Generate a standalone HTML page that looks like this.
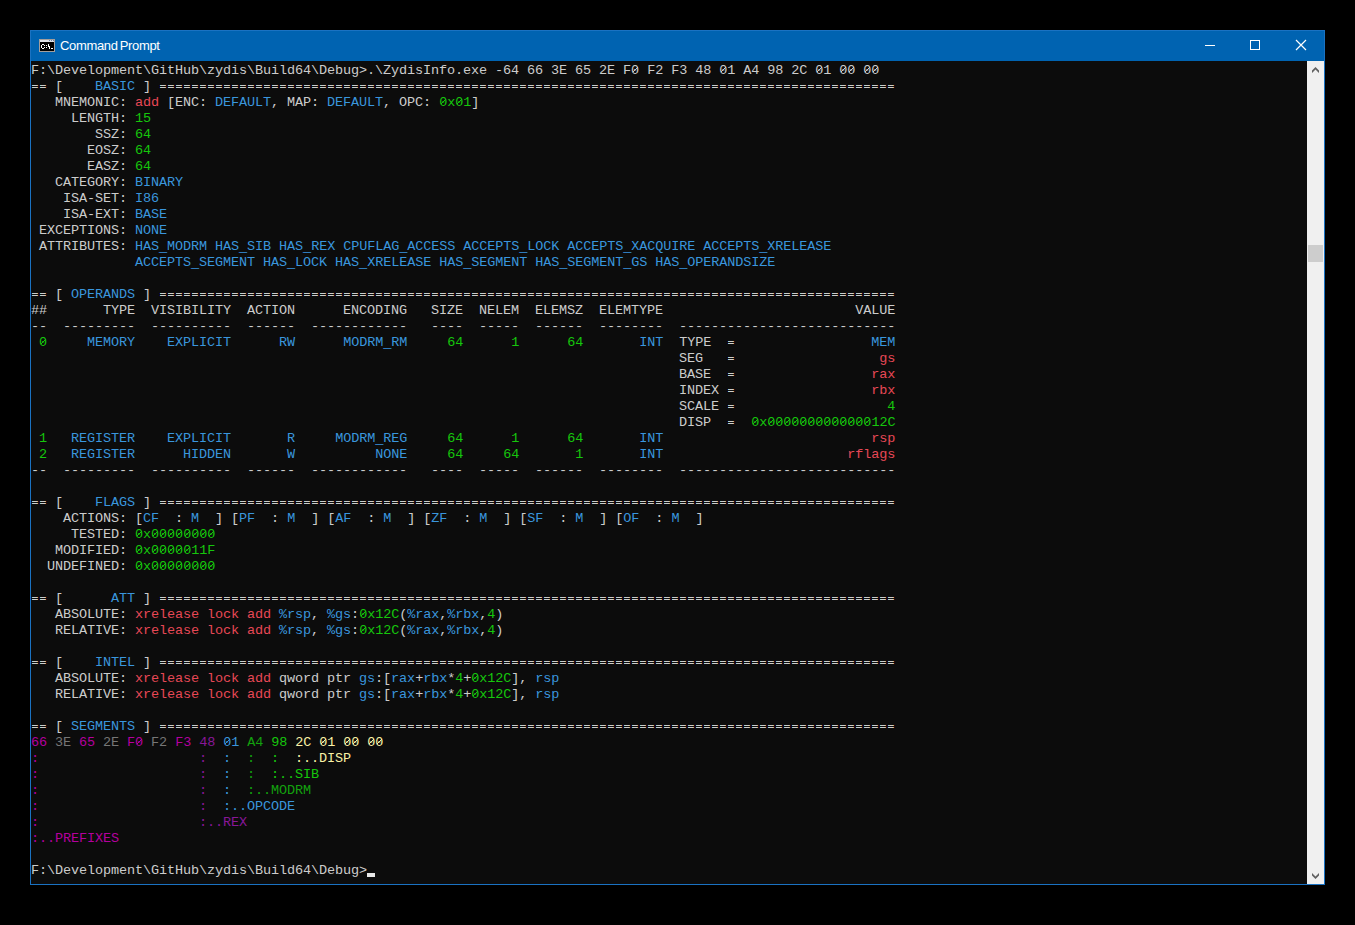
<!DOCTYPE html>
<html><head><meta charset="utf-8">
<style>
html,body{margin:0;padding:0;}
body{width:1355px;height:925px;background:#000;position:relative;overflow:hidden;}
#win{position:absolute;left:30px;top:30px;width:1293px;height:853px;background:#0063b1;border:1px solid #1a72c2;}
#title{position:absolute;left:31px;top:39px;width:20px;height:20px;}
#ttext{position:absolute;left:60px;top:38px;font-family:"Liberation Sans",sans-serif;font-size:13px;letter-spacing:-0.35px;word-spacing:-1px;color:#fff;white-space:pre;line-height:16px;}
#content{position:absolute;left:31px;top:61px;width:1276px;height:823px;background:#0c0c0c;overflow:hidden;}
#sb{position:absolute;left:1307px;top:61px;width:17px;height:823px;background:#f0f0f0;}
#thumb{position:absolute;left:1308px;top:245px;width:15px;height:17px;background:#cdcdcd;}
#term{position:absolute;left:31px;top:62.5px;margin:0;font-family:"Liberation Mono",monospace;font-size:13.5px;line-height:16px;letter-spacing:-0.1px;color:#cccccc;white-space:pre;}
.b{color:#3a96dd}.n{color:#16c60c}.r{color:#e74856}.m{color:#b4009e}.p{color:#881798}.d{color:#767676}.e{color:#13a10e}.y{color:#f9f1a5}
.eq{position:absolute;height:16px;background-image:linear-gradient(to right,#0b0b55 0 1px,#96d8d2 1px 2px,#cccccc 2px 6px,#dcb46e 6px 7px,#4a0a0a 7px 8px),linear-gradient(to right,#0b0b55 0 1px,#96d8d2 1px 2px,#cccccc 2px 6px,#dcb46e 6px 7px,#4a0a0a 7px 8px);background-size:8px 1px,8px 1px;background-position:0 8px,0 10px;background-repeat:repeat-x;}
#term i{font-style:normal;position:relative;}
#term i::after{content:"";position:absolute;left:2px;top:4.5px;width:5px;height:5px;background:linear-gradient(to bottom right,transparent 42%,currentColor 42% 58%,transparent 58%);}
#term b{font-weight:normal;position:relative;top:1px;text-shadow:0 0 0 currentColor;}
#cursor{position:absolute;left:367px;top:873px;width:8px;height:4px;background:#e8e8e8;}
</style></head><body>
<div id="win"></div>
<div id="content"></div>
<div id="sb"></div>
<div id="thumb"></div>
<svg style="position:absolute;left:0;top:0" width="1355" height="925" shape-rendering="crispEdges">
<rect x="39" y="39" width="16" height="13" fill="#a39e9c"/>
<rect x="40" y="40" width="14" height="2" fill="#dde0e5"/>
<rect x="49" y="40" width="1" height="1" fill="#6e84a8"/><rect x="51" y="40" width="1" height="1" fill="#6e84a8"/><rect x="53" y="40" width="1" height="1" fill="#6e84a8"/>
<rect x="40" y="42" width="14" height="9" fill="#000"/>
<g fill="#fff">
<rect x="42" y="44" width="2" height="1"/><rect x="41" y="45" width="1" height="3"/><rect x="42" y="48" width="2" height="1"/>
<rect x="44" y="45" width="1" height="1"/><rect x="44" y="47" width="1" height="1"/>
<rect x="46" y="45" width="1" height="1"/><rect x="46" y="47" width="1" height="1"/>
<rect x="48" y="44" width="1" height="3"/><rect x="49" y="46" width="1" height="3"/>
<rect x="51" y="48" width="2" height="1"/>
</g>
<line x1="1205" y1="45.5" x2="1215" y2="45.5" stroke="#fff" stroke-width="1" shape-rendering="auto"/>
<rect x="1250.5" y="40.5" width="9" height="9" fill="none" stroke="#fff" stroke-width="1" shape-rendering="auto"/>
<path d="M1296 40 L1306 50 M1306 40 L1296 50" stroke="#fff" stroke-width="1.2" shape-rendering="auto"/>
<path d="M1312 73 L1312 70.5 L1315.5 67 L1319 70.5 L1319 73 L1315.5 69.5 Z" fill="#606060" shape-rendering="auto"/>
<path d="M1312 873 L1312 875.5 L1315.5 879 L1319 875.5 L1319 873 L1315.5 876.5 Z" fill="#606060" shape-rendering="auto"/>
</svg>
<div id="ttext">Command Prompt</div>
<pre id="term">F:\Development\GitHub\zydis\Build64\Debug&gt;.\ZydisInfo.exe -64 66 3E 65 2E F<i>0</i> F2 F3 48 <i>0</i>1 A4 98 2C <i>0</i>1 <i>0</i><i>0</i> <i>0</i><i>0</i>
   [ <span class="b">   BASIC</span> ]                                                                                             
   MNEMONIC: <span class="r">add</span> [ENC: <span class="b">DEFAULT</span>, MAP: <span class="b">DEFAULT</span>, OPC: <span class="n"><i>0</i>x<i>0</i>1</span>]
     LENGTH: <span class="n">15</span>
        SSZ: <span class="n">64</span>
       EOSZ: <span class="n">64</span>
       EASZ: <span class="n">64</span>
   CATEGORY: <span class="b">BINARY</span>
    ISA-SET: <span class="b">I86</span>
    ISA-EXT: <span class="b">BASE</span>
 EXCEPTIONS: <span class="b">NONE</span>
 ATTRIBUTES: <span class="b">HAS<b>_</b>MODRM HAS<b>_</b>SIB HAS<b>_</b>REX CPUFLAG<b>_</b>ACCESS ACCEPTS<b>_</b>LOCK ACCEPTS<b>_</b>XACQUIRE ACCEPTS<b>_</b>XRELEASE</span>
             <span class="b">ACCEPTS<b>_</b>SEGMENT HAS<b>_</b>LOCK HAS<b>_</b>XRELEASE HAS<b>_</b>SEGMENT HAS<b>_</b>SEGMENT<b>_</b>GS HAS<b>_</b>OPERANDSIZE</span>

   [ <span class="b">OPERANDS</span> ]                                                                                             
##       TYPE  VISIBILITY  ACTION      ENCODING   SIZE  NELEM  ELEMSZ  ELEMTYPE                        VALUE
--  ---------  ----------  ------  ------------   ----  -----  ------  --------  ---------------------------
 <span class="n"><i>0</i></span>  <span class="b">   MEMORY</span>  <span class="b">  EXPLICIT</span>  <span class="b">    RW</span>  <span class="b">    MODRM<b>_</b>RM</span>   <span class="n">  64</span>  <span class="n">    1</span>  <span class="n">    64</span>  <span class="b">     INT</span>  TYPE   <span class="b">                 MEM</span>
                                                                                 SEG    <span class="r">                  gs</span>
                                                                                 BASE   <span class="r">                 rax</span>
                                                                                 INDEX  <span class="r">                 rbx</span>
                                                                                 SCALE  <span class="n">                   4</span>
                                                                                 DISP   <span class="n">  <i>0</i>x<i>0</i><i>0</i><i>0</i><i>0</i><i>0</i><i>0</i><i>0</i><i>0</i><i>0</i><i>0</i><i>0</i><i>0</i><i>0</i>12C</span>
 <span class="n">1</span>  <span class="b"> REGISTER</span>  <span class="b">  EXPLICIT</span>  <span class="b">     R</span>  <span class="b">   MODRM<b>_</b>REG</span>   <span class="n">  64</span>  <span class="n">    1</span>  <span class="n">    64</span>  <span class="b">     INT</span>  <span class="r">                        rsp</span>
 <span class="n">2</span>  <span class="b"> REGISTER</span>  <span class="b">    HIDDEN</span>  <span class="b">     W</span>  <span class="b">        NONE</span>   <span class="n">  64</span>  <span class="n">   64</span>  <span class="n">     1</span>  <span class="b">     INT</span>  <span class="r">                     rflags</span>
--  ---------  ----------  ------  ------------   ----  -----  ------  --------  ---------------------------

   [ <span class="b">   FLAGS</span> ]                                                                                             
    ACTIONS: [<span class="b">CF  </span>: <span class="b">M  </span>] [<span class="b">PF  </span>: <span class="b">M  </span>] [<span class="b">AF  </span>: <span class="b">M  </span>] [<span class="b">ZF  </span>: <span class="b">M  </span>] [<span class="b">SF  </span>: <span class="b">M  </span>] [<span class="b">OF  </span>: <span class="b">M  </span>] 
     TESTED: <span class="n"><i>0</i>x<i>0</i><i>0</i><i>0</i><i>0</i><i>0</i><i>0</i><i>0</i><i>0</i></span>
   MODIFIED: <span class="n"><i>0</i>x<i>0</i><i>0</i><i>0</i><i>0</i><i>0</i>11F</span>
  UNDEFINED: <span class="n"><i>0</i>x<i>0</i><i>0</i><i>0</i><i>0</i><i>0</i><i>0</i><i>0</i><i>0</i></span>

   [ <span class="b">     ATT</span> ]                                                                                             
   ABSOLUTE: <span class="r">xrelease lock add </span><span class="b">%rsp</span>, <span class="b">%gs</span>:<span class="n"><i>0</i>x12C</span>(<span class="b">%rax</span>,<span class="b">%rbx</span>,<span class="n">4</span>)
   RELATIVE: <span class="r">xrelease lock add </span><span class="b">%rsp</span>, <span class="b">%gs</span>:<span class="n"><i>0</i>x12C</span>(<span class="b">%rax</span>,<span class="b">%rbx</span>,<span class="n">4</span>)

   [ <span class="b">   INTEL</span> ]                                                                                             
   ABSOLUTE: <span class="r">xrelease lock add </span>qword ptr <span class="b">gs</span>:[<span class="b">rax</span>+<span class="b">rbx</span>*<span class="n">4</span>+<span class="n"><i>0</i>x12C</span>], <span class="b">rsp</span>
   RELATIVE: <span class="r">xrelease lock add </span>qword ptr <span class="b">gs</span>:[<span class="b">rax</span>+<span class="b">rbx</span>*<span class="n">4</span>+<span class="n"><i>0</i>x12C</span>], <span class="b">rsp</span>

   [ <span class="b">SEGMENTS</span> ]                                                                                             
<span class="m">66 </span><span class="d">3E </span><span class="m">65 </span><span class="d">2E </span><span class="m">F<i>0</i> </span><span class="d">F2 </span><span class="m">F3 </span><span class="p">48 </span><span class="b"><i>0</i>1 </span><span class="e">A4 </span><span class="n">98 </span><span class="y">2C <i>0</i>1 <i>0</i><i>0</i> <i>0</i><i>0</i></span>
<span class="m">:</span>                    <span class="p">:  </span><span class="b">:  </span><span class="e">:  </span><span class="n">:  </span><span class="y">:..DISP</span>
<span class="m">:</span>                    <span class="p">:  </span><span class="b">:  </span><span class="e">:  </span><span class="n">:..SIB</span>
<span class="m">:</span>                    <span class="p">:  </span><span class="b">:  </span><span class="e">:..MODRM</span>
<span class="m">:</span>                    <span class="p">:  </span><span class="b">:..OPCODE</span>
<span class="m">:</span>                    <span class="p">:..REX</span>
<span class="m">:..PREFIXES</span>

F:\Development\GitHub\zydis\Build64\Debug&gt;</pre>
<div class="eq" style="left:31px;top:77px;width:16px"></div><div class="eq" style="left:159px;top:77px;width:736px"></div>
<div class="eq" style="left:31px;top:285px;width:16px"></div><div class="eq" style="left:159px;top:285px;width:736px"></div>
<div class="eq" style="left:727px;top:333px;width:8px"></div>
<div class="eq" style="left:727px;top:349px;width:8px"></div>
<div class="eq" style="left:727px;top:365px;width:8px"></div>
<div class="eq" style="left:727px;top:381px;width:8px"></div>
<div class="eq" style="left:727px;top:397px;width:8px"></div>
<div class="eq" style="left:727px;top:413px;width:8px"></div>
<div class="eq" style="left:31px;top:493px;width:16px"></div><div class="eq" style="left:159px;top:493px;width:736px"></div>
<div class="eq" style="left:31px;top:589px;width:16px"></div><div class="eq" style="left:159px;top:589px;width:736px"></div>
<div class="eq" style="left:31px;top:653px;width:16px"></div><div class="eq" style="left:159px;top:653px;width:736px"></div>
<div class="eq" style="left:31px;top:717px;width:16px"></div><div class="eq" style="left:159px;top:717px;width:736px"></div>
<div id="cursor"></div>
</body></html>
